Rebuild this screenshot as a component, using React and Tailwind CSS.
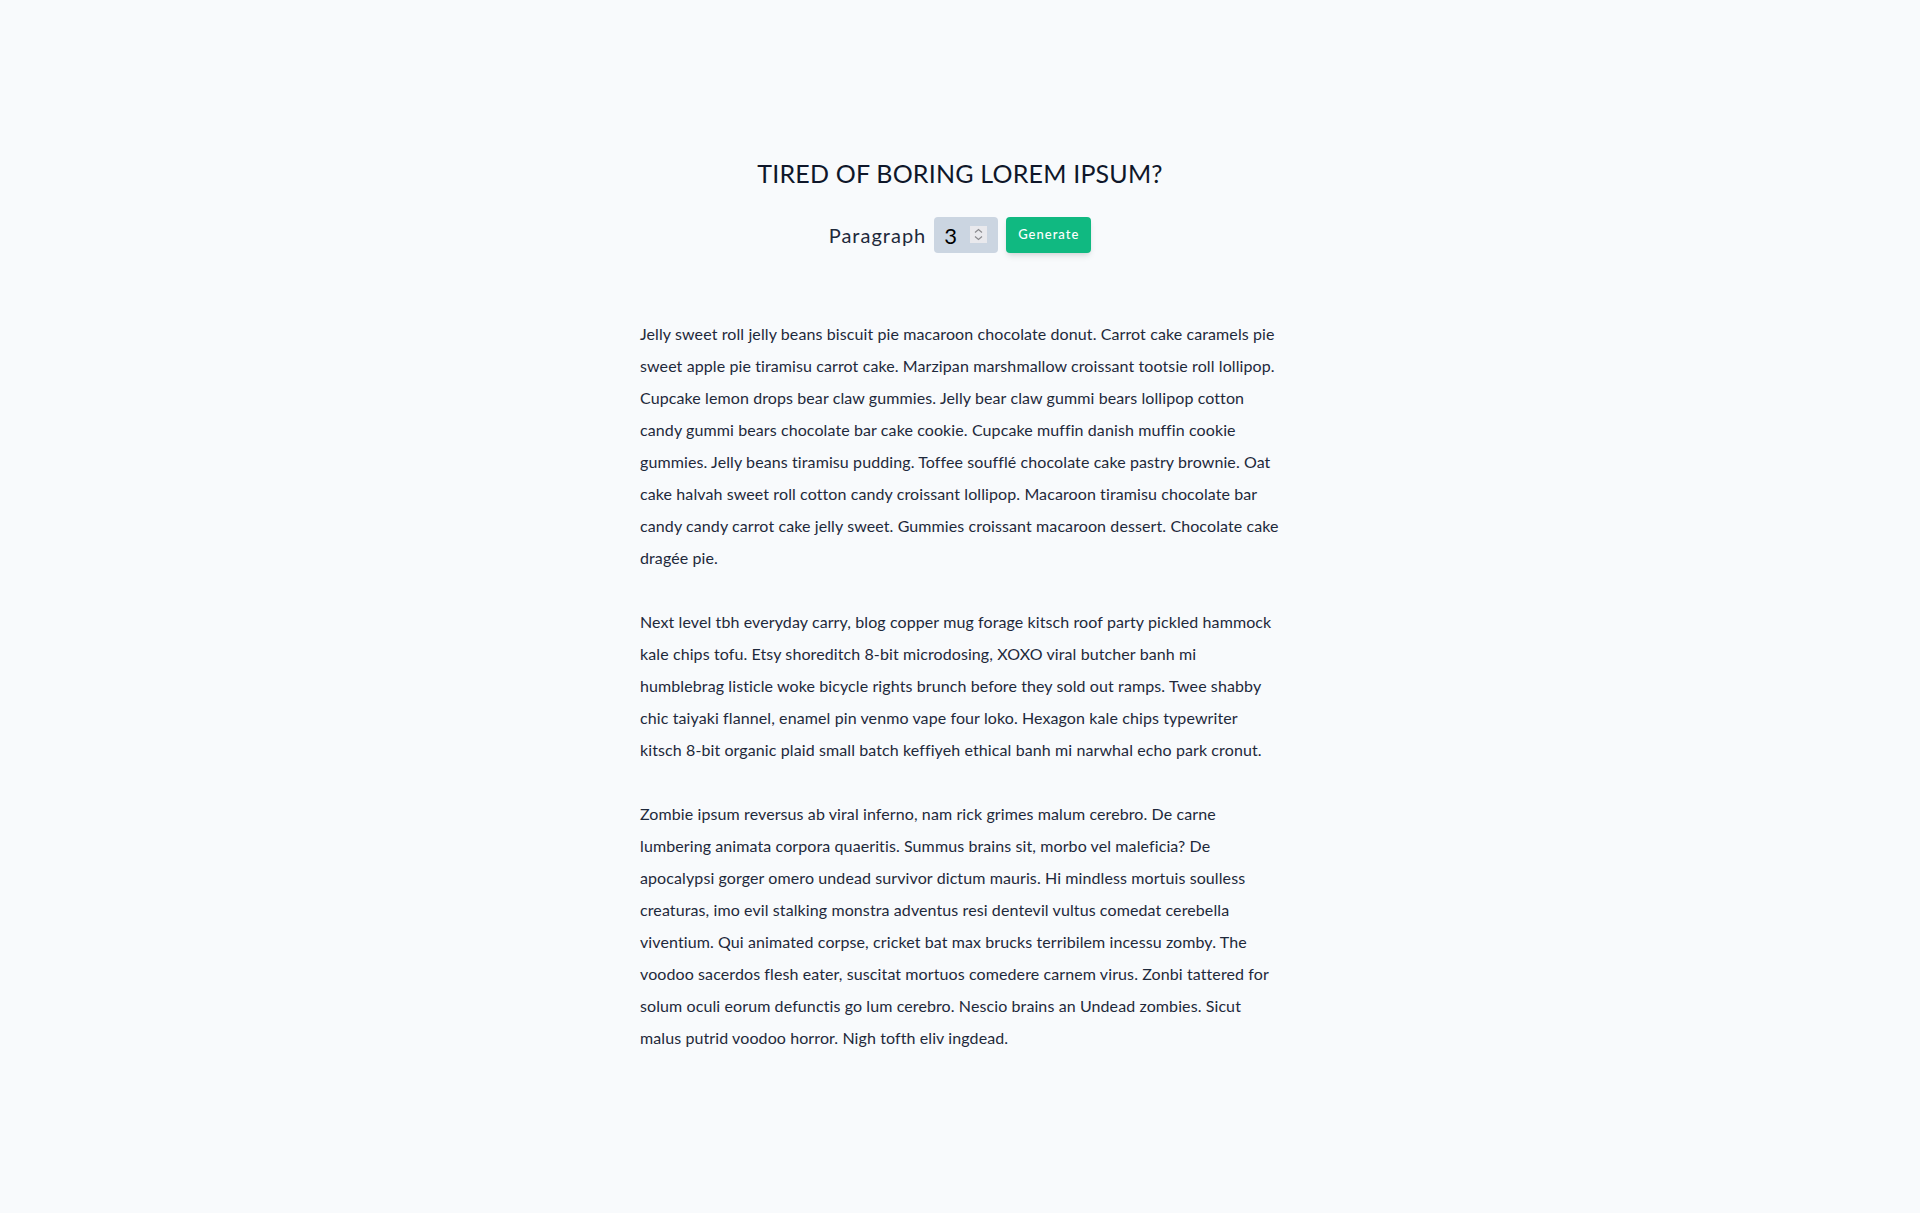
import { useState } from 'react';

const paragraphs = [
  'Jelly sweet roll jelly beans biscuit pie macaroon chocolate donut. Carrot cake caramels pie sweet apple pie tiramisu carrot cake. Marzipan marshmallow croissant tootsie roll lollipop. Cupcake lemon drops bear claw gummies. Jelly bear claw gummi bears lollipop cotton candy gummi bears chocolate bar cake cookie. Cupcake muffin danish muffin cookie gummies. Jelly beans tiramisu pudding. Toffee soufflé chocolate cake pastry brownie. Oat cake halvah sweet roll cotton candy croissant lollipop. Macaroon tiramisu chocolate bar candy candy carrot cake jelly sweet. Gummies croissant macaroon dessert. Chocolate cake dragée pie.',
  'Next level tbh everyday carry, blog copper mug forage kitsch roof party pickled hammock kale chips tofu. Etsy shoreditch 8-bit microdosing, XOXO viral butcher banh mi humblebrag listicle woke bicycle rights brunch before they sold out ramps. Twee shabby chic taiyaki flannel, enamel pin venmo vape four loko. Hexagon kale chips typewriter kitsch 8-bit organic plaid small batch keffiyeh ethical banh mi narwhal echo park cronut.',
  'Zombie ipsum reversus ab viral inferno, nam rick grimes malum cerebro. De carne lumbering animata corpora quaeritis. Summus brains sit, morbo vel maleficia? De apocalypsi gorger omero undead survivor dictum mauris. Hi mindless mortuis soulless creaturas, imo evil stalking monstra adventus resi dentevil vultus comedat cerebella viventium. Qui animated corpse, cricket bat max brucks terribilem incessu zomby. The voodoo sacerdos flesh eater, suscitat mortuos comedere carnem virus. Zonbi tattered for solum oculi eorum defunctis go lum cerebro. Nescio brains an Undead zombies. Sicut malus putrid voodoo horror. Nigh tofth eliv ingdead.',
];

const App = () => {
  const [count, setCount] = useState(3);
  const [text, setText] = useState(paragraphs);

  const handleSubmit = (e) => {
    e.preventDefault();
    let amount = parseInt(count);
    if (amount <= 0) amount = 1;
    if (amount > paragraphs.length) amount = paragraphs.length;
    setText(paragraphs.slice(0, amount));
  };

  return (
    <div className="min-h-screen bg-[#f8fafc] text-[#102a43] font-['Lato','Open_Sans',sans-serif]">
      <section className="pt-[154px] text-center">
        <h3 className="text-[25px] leading-[39px] tracking-[0.2px] uppercase text-[#0f172a]">
          Tired of boring lorem ipsum?
        </h3>
        <form onSubmit={handleSubmit} className="mt-6 flex justify-center items-center">
          <label htmlFor="amount" className="text-xl tracking-[1px] mr-2 text-[#1e293b]">
            Paragraph
          </label>
          <div className="relative w-16 h-9">
            <input
              type="number"
              name="amount"
              id="amount"
              value={count}
              onChange={(e) => setCount(e.target.value)}
              className="w-16 h-9 pl-[10px] pr-1 rounded bg-[#cbd5e1] text-[22px] text-black outline-none [appearance:textfield] [&::-webkit-inner-spin-button]:appearance-none"
            />
            {/* spinner box */}
            <div className="absolute left-9 top-[9px] w-[17px] h-[17px] bg-[#e9e9ed] flex items-center justify-center pointer-events-none">
              <svg width="9" height="13" viewBox="0 0 9 13" fill="none" stroke="#8a8a8e" strokeWidth="1.2">
                <path d="M1 4.5 L4.5 1.5 L8 4.5" />
                <path d="M1 8.5 L4.5 11.5 L8 8.5" />
              </svg>
            </div>
          </div>
          <button
            type="submit"
            className="ml-2 w-[85px] h-9 rounded bg-[#10b981] text-white text-[13px] tracking-[1px] font-medium shadow-md"
          >
            Generate
          </button>
        </form>
        <article className="mx-auto mt-[65px] w-[640px] text-left text-base leading-8 tracking-[0.1px] text-[#1e293b]">
          {text.map((item, index) => (
            <p key={index} className="mb-8">
              {item}
            </p>
          ))}
        </article>
      </section>
    </div>
  );
};

export default App;
